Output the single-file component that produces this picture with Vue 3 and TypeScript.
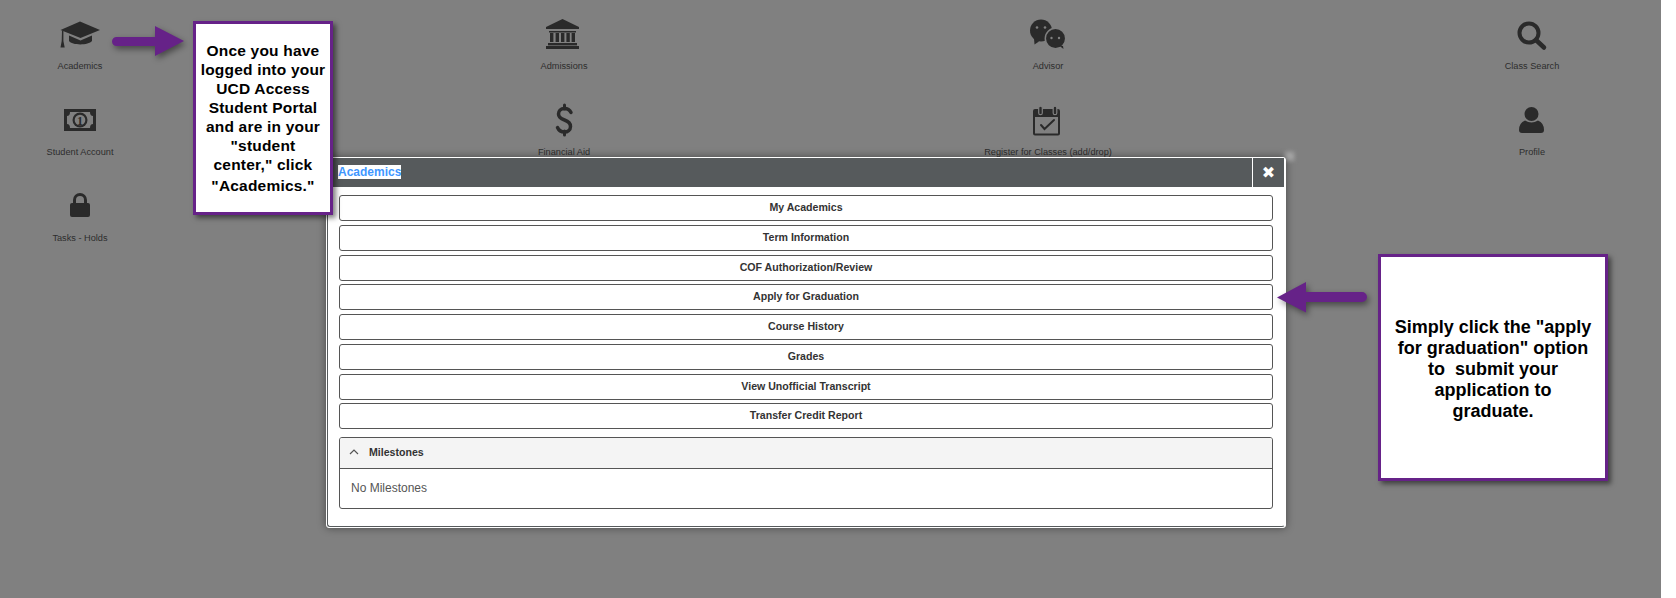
<script setup lang="ts">
const links: string[] = [
  'My Academics',
  'Term Information',
  'COF Authorization/Review',
  'Apply for Graduation',
  'Course History',
  'Grades',
  'View Unofficial Transcript',
  'Transfer Credit Report',
]
</script>

<template>
  <div class="stage">
    <div class="tiles">
      <a class="tile">
        <svg class="ico" viewBox="0 0 48 36">
          <path d="M24 4.500 44 13 24.500 21 4.500 13Z" />
          <path d="M13 18.500 24.500 23.500 36 18.500V24C32.500 28.500 16 28.500 13 24Z" />
          <path d="M6 13.500h1.400v10.500l1.300 6.500H4.500l1.200-6.500Z" />
        </svg>
        <span>Academics</span>
      </a>
      <a class="tile">
        <svg class="ico" viewBox="0 0 48 36">
          <path d="M22.500 2 39 10v2H6v-2Z" />
          <path d="M9 14h27v1.500H9ZM10 16h3.400v9H10ZM15.600 16h3.400v9h-3.400ZM21 16h3.400v9H21ZM26.400 16h3.400v9h-3.400ZM31.600 16H35v9h-3.400Z" />
          <rect x="8" y="26" width="29" height="2.400" />
          <rect x="6" y="29" width="33" height="3" />
        </svg>
        <span>Admissions</span>
      </a>
      <a class="tile">
        <svg class="ico" viewBox="0 0 48 36">
          <circle cx="17" cy="13.500" r="11" />
          <path d="M10 21.500l5 3-4.500 3Z" />
          <circle cx="31.500" cy="21.500" r="10.200" class="knock" />
          <path d="M35 28.500l4 .5.5 3Z" />
          <g class="eye">
            <circle cx="13" cy="10.500" r="1.300" />
            <circle cx="21" cy="10.500" r="1.300" />
            <circle cx="27.500" cy="21" r="1.200" />
            <circle cx="35" cy="21" r="1.200" />
          </g>
        </svg>
        <span>Advisor</span>
      </a>
      <a class="tile">
        <svg class="ico" viewBox="0 0 48 36">
          <circle cx="21" cy="16" r="9.500" class="line w4" />
          <path d="M28 23l8 7.500" class="line w5" />
        </svg>
        <span>Class Search</span>
      </a>

      <a class="tile">
        <svg class="ico" viewBox="0 0 48 36">
          <path fill-rule="evenodd" d="M8 6h32v22H8ZM14 9q0 4-3 4v8q3 0 3 4h20q0-4 3-4v-8q-3 0-3-4Z" />
          <circle cx="24" cy="17" r="7.500" />
          <circle cx="24" cy="17" r="5.300" class="eye-fill" />
          <text x="24" y="21.500" text-anchor="middle" class="one">1</text>
        </svg>
        <span>Student Account</span>
      </a>
      <a class="tile">
        <svg class="ico" viewBox="0 0 48 36">
          <path d="M31 9.500C29.500 6.500 27 5.500 24.500 5.500 20.500 5.500 18.500 8 18.500 11c0 4 3.500 5 6 6 3 1 6 2.500 6 6.500 0 3.500-3 5.500-6 5.500-2.500 0-5.500-1-7-4.500" class="line w35" />
          <path d="M24.500 2v4M24.500 28v4" class="line w3" />
        </svg>
        <span>Financial Aid</span>
      </a>
      <a class="tile">
        <svg class="ico" viewBox="0 0 48 36">
          <rect x="10" y="7" width="25" height="24.500" rx="1" class="line w2" />
          <rect x="10" y="7" width="25" height="7" />
          <rect x="14.700" y="3.200" width="3.600" height="8.500" rx="1.800" class="ring" />
          <rect x="29.200" y="3.200" width="3.600" height="8.500" rx="1.800" class="ring" />
          <path d="M17 22l3.500 4 9.500-9" class="line w2" />
        </svg>
        <span>Register for Classes (add/drop)</span>
      </a>
      <a class="tile">
        <svg class="ico" viewBox="0 0 48 36">
          <circle cx="23.500" cy="11" r="7" />
          <path d="M11 27q0-7 6-9.500 6.500 4 13 0 6 2.500 6 9.500 0 3-3 3H14q-3 0-3-3Z" />
        </svg>
        <span>Profile</span>
      </a>

      <a class="tile">
        <svg class="ico" viewBox="0 0 48 36">
          <rect x="14" y="14" width="20" height="14" rx="2" />
          <path d="M18.500 15v-4a5.500 5.500 0 0 1 11 0v4" class="line w3" />
        </svg>
        <span>Tasks - Holds</span>
      </a>
    </div>

    <svg class="arrow arrow-one" viewBox="0 0 84 40" width="84" height="40">
      <path d="M8.500 11H47V0l29 15L47 30V20H8.500a4.500 4.500 0 0 1 0-9Z" />
    </svg>
    <aside class="note note-one">
      <p>
        Once you have<br />logged into your<br />UCD Access<br />Student Portal<br />and are in your<br />"student<br />center," click<br /><span class="last">"Academics."</span>
      </p>
    </aside>

    <div class="glint"></div>

    <section class="modal">
      <div class="frame">
        <header class="head">
          <span class="title"><mark>Academics</mark></span>
          <button class="close" type="button">✖</button>
        </header>
        <div class="body">
          <nav class="links">
            <a v-for="link in links" :key="link" class="link">{{ link }}</a>
          </nav>
          <div class="group">
            <div class="group-head">
              <svg class="chev" viewBox="0 0 10 6" width="10" height="6">
                <path d="M1 5l4-4 4 4" />
              </svg>
              <span>Milestones</span>
            </div>
            <div class="group-body">No Milestones</div>
          </div>
        </div>
      </div>
    </section>

    <svg class="arrow arrow-two" viewBox="0 0 96 34" width="96" height="34">
      <path d="M1 16.500 30 1v10h56a5 5 0 0 1 0 10H30v10.500Z" />
    </svg>
    <aside class="note note-two">
      <p>
        Simply click the "apply<br />for graduation" option<br />to&nbsp; submit your<br />application to<br />graduate.
      </p>
    </aside>
  </div>
</template>

<style>
html,
body {
  margin: 0;
  background: #fff;
}
</style>

<style scoped>
.stage {
  position: relative;
  width: 1661px;
  height: 598px;
  overflow: hidden;
  background: #808080;
  font-family: "Liberation Sans", Arial, sans-serif;
}
.tiles {
  display: grid;
  grid-template-columns: repeat(4, 160px);
  grid-auto-rows: 86px;
  column-gap: 324px;
  padding-top: 17px;
}
.tile {
  display: flex;
  flex-direction: column;
  align-items: center;
  font-size: 9.200px;
  line-height: 12px;
  color: #2d2d2d;
  white-space: nowrap;
}
.tile span {
  margin-top: 7px;
}
.ico {
  width: 48px;
  height: 36px;
  fill: #2a2a2a;
}
.line {
  fill: none;
  stroke: #2a2a2a;
  stroke-linecap: round;
}
.w2 { stroke-width: 2; }
.w3 { stroke-width: 3; }
.w35 { stroke-width: 3.500; }
.w4 { stroke-width: 4; }
.w5 { stroke-width: 4.500; }
.knock {
  stroke: #808080;
  stroke-width: 1.500;
}
.eye,
.eye-fill {
  fill: #808080;
}
.one {
  font-size: 12px;
  font-weight: 700;
  font-family: "Liberation Serif", serif;
  fill: #2a2a2a;
}
.ring {
  fill: #2a2a2a;
  stroke: #808080;
  stroke-width: 1.200;
}

.arrow {
  position: absolute;
  fill: #662288;
  filter: drop-shadow(2px 3px 3px rgba(0, 0, 0, 0.45));
}
.arrow-one {
  left: 108px;
  top: 26px;
}
.arrow-two {
  left: 1276px;
  top: 281px;
}
.note {
  position: absolute;
  box-sizing: border-box;
  display: flex;
  align-items: center;
  justify-content: center;
  border: 3px solid #662288;
  background: #fff;
  color: #000;
  font-weight: 700;
  text-align: center;
  white-space: nowrap;
  box-shadow: 3px 3px 5px rgba(0, 0, 0, 0.5);
  z-index: 2;
}
.note p {
  margin: 0;
}
.note-one {
  left: 193px;
  top: 21px;
  width: 140px;
  height: 194px;
  font-size: 15.500px;
  line-height: 19px;
  letter-spacing: 0.2px;
}
.last {
  display: inline-block;
  margin-top: 2px;
}
.note-two {
  left: 1378px;
  top: 254px;
  width: 230px;
  height: 227px;
  padding-top: 3px;
  font-size: 18px;
  line-height: 21px;
}

.glint {
  position: absolute;
  left: 1285px;
  top: 152px;
  width: 9px;
  height: 9px;
  background: #a8a8a8;
  filter: blur(2px);
}
.modal {
  position: absolute;
  left: 326px;
  top: 157px;
  width: 960px;
  height: 371px;
  box-sizing: border-box;
  border: 1px solid #fff;
  border-radius: 3px;
  background: #fff;
  box-shadow: 0 0 9px rgba(0, 0, 0, 0.45);
}
.frame {
  display: flex;
  flex-direction: column;
  height: 100%;
  box-sizing: border-box;
  border: 1px solid #565a5c;
  border-top: 0;
  border-right-color: #fff;
  border-radius: 3px;
}
.head {
  display: flex;
  align-items: center;
  justify-content: space-between;
  flex: 0 0 29px;
  background: #565a5c;
}
.title {
  margin: 0 0 2px 10px;
  font-size: 12px;
  font-weight: 700;
  line-height: 14px;
}
.title mark {
  background: #fff;
  color: #3f97ff;
}
.close {
  width: 32px;
  height: 29px;
  padding: 0;
  border: 0;
  border-left: 1px solid #fff;
  background: none;
  color: #fff;
  font-size: 16px;
  font-family: "DejaVu Sans", sans-serif;
}
.body {
  display: flex;
  flex-direction: column;
  gap: 8px;
  padding: 8px 11px 0 11px;
}
.links {
  display: flex;
  flex-direction: column;
  gap: 3.750px;
}
.link {
  box-sizing: border-box;
  height: 26px;
  border: 1px solid #555;
  border-radius: 3px;
  background: #fff;
  color: #333;
  font-size: 10.600px;
  font-weight: 700;
  line-height: 22px;
  text-align: center;
}
.group {
  box-sizing: border-box;
  height: 72px;
  border: 1px solid #555;
  border-radius: 3px;
  overflow: hidden;
}
.group-head {
  display: flex;
  align-items: center;
  box-sizing: border-box;
  height: 31px;
  padding: 0 0 2px 9px;
  border-bottom: 1px solid #555;
  background: #f4f4f4;
  color: #333;
  font-size: 10.600px;
  font-weight: 700;
}
.chev {
  margin-right: 10px;
  fill: none;
  stroke: #555;
  stroke-width: 1.200;
}
.group-body {
  padding: 11px 11px 0;
  color: #555;
  font-size: 12px;
  line-height: 16px;
}
</style>
